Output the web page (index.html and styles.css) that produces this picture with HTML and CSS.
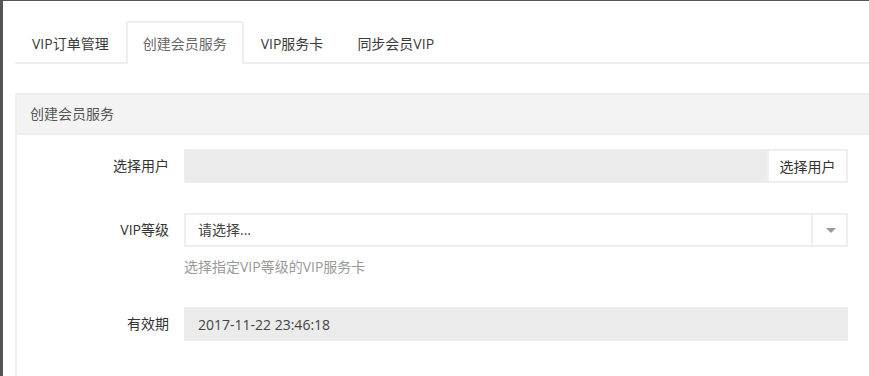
FILE: index.html
```html
<!DOCTYPE html>
<html lang="zh-CN">
<head>
  <meta charset="UTF-8">
  <title>创建会员服务</title>
  <meta name="viewport" content="width=device-width, initial-scale=1.0">
  <link rel="stylesheet" href="styles.css">
</head>
<body>
  <div class="frame">
    <ul class="tabs">
      <li><a href="#">VIP订单管理</a></li>
      <li class="active"><a href="#">创建会员服务</a></li>
      <li><a href="#">VIP服务卡</a></li>
      <li><a href="#">同步会员VIP</a></li>
    </ul>

    <div class="panel">
      <div class="panel-heading">创建会员服务</div>
      <div class="panel-body">
        <div class="form-row">
          <label>选择用户</label>
          <div class="input-group">
            <input type="text" class="field readonly" readonly>
            <button class="addon-btn">选择用户</button>
          </div>
        </div>

        <div class="form-row">
          <label>VIP等级</label>
          <div>
            <div class="select">
              <span class="select-text">请选择...</span>
              <span class="select-arrow"></span>
            </div>
            <div class="help">选择指定VIP等级的VIP服务卡</div>
          </div>
        </div>

        <div class="form-row">
          <label>有效期</label>
          <input type="text" class="field readonly" value="2017-11-22 23:46:18" readonly>
        </div>
      </div>
    </div>
  </div>
</body>
</html>
```

FILE: styles.css
```css
* {
  box-sizing: border-box;
}

body {
  margin: 0;
  background: #fff;
  color: #333;
  font-family: "Open Sans", "Noto Sans CJK SC", sans-serif;
  font-size: 14px;
}

.frame {
  height: 100vh;
  overflow: hidden;
  border-left: 3px solid #555;
  border-top: 1px solid #555;
  padding: 20px 0 0 12px;
}

/* tabs */
.tabs {
  list-style: none;
  margin: 0;
  padding: 0;
  display: flex;
  border-bottom: 2px solid #eee;
}
.tabs li {
  margin-bottom: -2px;
}
.tabs a {
  display: block;
  padding: 0 15px;
  height: 41px;
  line-height: 41px;
  color: #3a3a3a;
  text-decoration: none;
  border: 2px solid transparent;
  border-bottom: none;
  border-radius: 3px 3px 0 0;
}
.tabs li.active a {
  color: #666;
  background: #fff;
  border-color: #eee;
  height: 43px;
}

/* panel */
.panel {
  margin-top: 29px;
  margin-right: -10px;
  border: 2px solid #eee;
  border-right: none;
}
.panel-heading {
  background: #f3f3f3;
  border-bottom: 2px solid #eee;
  height: 40px;
  line-height: 38px;
  padding-left: 13px;
  font-size: 14px;
  color: #555;
}
.panel-body {
  padding: 14px 31px 30px 0;
}

.form-row {
  display: grid;
  grid-template-columns: 152px 1fr;
  column-gap: 15px;
  margin-bottom: 30px;
}
.form-row label {
  text-align: right;
  line-height: 34px;
  color: #333;
}

.field {
  display: block;
  width: 100%;
  height: 34px;
  border: 1px solid #eee;
  padding: 0 13px;
  font-family: inherit;
  font-size: 14px;
  color: #444;
  outline: none;
}
.field.readonly {
  background: #ebebeb;
}

.input-group {
  display: flex;
}
.input-group .field {
  flex: 1;
}
.addon-btn {
  width: 81px;
  height: 34px;
  background: #fff;
  border: 2px solid #eee;
  font-family: inherit;
  font-size: 14px;
  color: #333;
  padding: 0;
}

.select {
  display: flex;
  height: 34px;
  border: 2px solid #eee;
  background: #fff;
}
.select-text {
  flex: 1;
  padding-left: 12px;
  line-height: 30px;
  color: #444;
}
.select-arrow {
  width: 35px;
  border-left: 2px solid #eee;
  position: relative;
}
.select-arrow::after {
  content: "";
  position: absolute;
  left: 13px;
  top: 13px;
  border-left: 5px solid transparent;
  border-right: 5px solid transparent;
  border-top: 5px solid #999;
}

.help {
  margin-top: 10px;
  line-height: 20px;
  color: #999;
  font-size: 14px;
}
```
